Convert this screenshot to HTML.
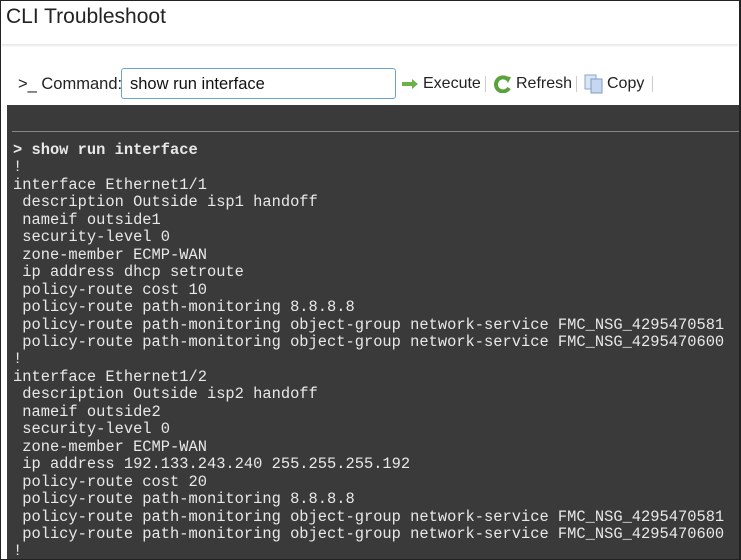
<!DOCTYPE html>
<html><head><meta charset="utf-8"><style>
*{margin:0;padding:0;box-sizing:border-box}
html,body{width:741px;height:560px;overflow:hidden;background:#fff}
body{position:relative;font-family:"Liberation Sans",sans-serif}
.frame{position:absolute;left:0;top:0;width:741px;height:560px;border:1.5px solid #222;border-right-width:2px}
.title{position:absolute;left:6px;top:5px;font-size:21px;color:#222}
.hdr{position:absolute;left:2px;right:3px;top:44px;height:3px;background:linear-gradient(#e6e6e6,#fafafa)}
.cmd{position:absolute;left:18px;top:75px;font-size:16.5px;color:#222}
.inp{position:absolute;left:121px;top:68px;width:275px;height:31px;border:1.5px solid #6aa2d8;border-radius:3px;font-size:16.5px;padding:6px 8px;color:#111}
.btn{position:absolute;top:75px;font-size:16px;color:#222}
.sep{position:absolute;top:76px;width:1px;height:16px;background:#ccc}
.term{position:absolute;left:7px;top:105px;right:0;bottom:0;background:#3a3a3a}
.rule{position:absolute;left:12px;right:0;top:131px;height:1px;background:#888}
pre{position:absolute;left:13px;top:142px;font-family:"Liberation Mono",monospace;font-size:15.4px;line-height:17.45px;color:#e8e8e8}
b{font-weight:bold}
</style></head><body>
<div class="title">CLI Troubleshoot</div>
<div class="hdr"></div>
<div class="cmd">&gt;_ Command:</div>
<div class="inp">show run interface</div>
<svg style="position:absolute;left:401px;top:78px" width="18" height="12" viewBox="0 0 18 12"><path d="M1 4h10V1l6 5-6 5V8H1z" fill="#6cb24a"/></svg>
<div class="btn" style="left:423px">Execute</div>
<div class="sep" style="left:485px"></div>
<svg style="position:absolute;left:494px;top:75px" width="18" height="18" viewBox="0 0 18 18"><path d="M14 4.5A7 7 0 1 0 15 13" fill="none" stroke="#5aa33c" stroke-width="4"/><path d="M10 1l7 1-3 6z" fill="#5aa33c"/></svg>
<div class="btn" style="left:516px">Refresh</div>
<div class="sep" style="left:576px"></div>
<svg style="position:absolute;left:584px;top:74px" width="20" height="20" viewBox="0 0 20 20"><rect x="1" y="1" width="11" height="14" fill="#dbe6f4" stroke="#8aa6cc"/><rect x="7" y="5" width="11" height="14" fill="#c6d8ef" stroke="#7f9cc4"/></svg>
<div class="btn" style="left:607px">Copy</div>
<div class="sep" style="left:652px"></div>
<div class="term"></div>
<div class="rule"></div>
<pre><b>&gt; show run interface</b>
!
interface Ethernet1/1
 description Outside isp1 handoff
 nameif outside1
 security-level 0
 zone-member ECMP-WAN
 ip address dhcp setroute
 policy-route cost 10
 policy-route path-monitoring 8.8.8.8
 policy-route path-monitoring object-group network-service FMC_NSG_4295470581
 policy-route path-monitoring object-group network-service FMC_NSG_4295470600
!
interface Ethernet1/2
 description Outside isp2 handoff
 nameif outside2
 security-level 0
 zone-member ECMP-WAN
 ip address 192.133.243.240 255.255.255.192
 policy-route cost 20
 policy-route path-monitoring 8.8.8.8
 policy-route path-monitoring object-group network-service FMC_NSG_4295470581
 policy-route path-monitoring object-group network-service FMC_NSG_4295470600
!</pre>
<div class="frame"></div>
</body></html>
